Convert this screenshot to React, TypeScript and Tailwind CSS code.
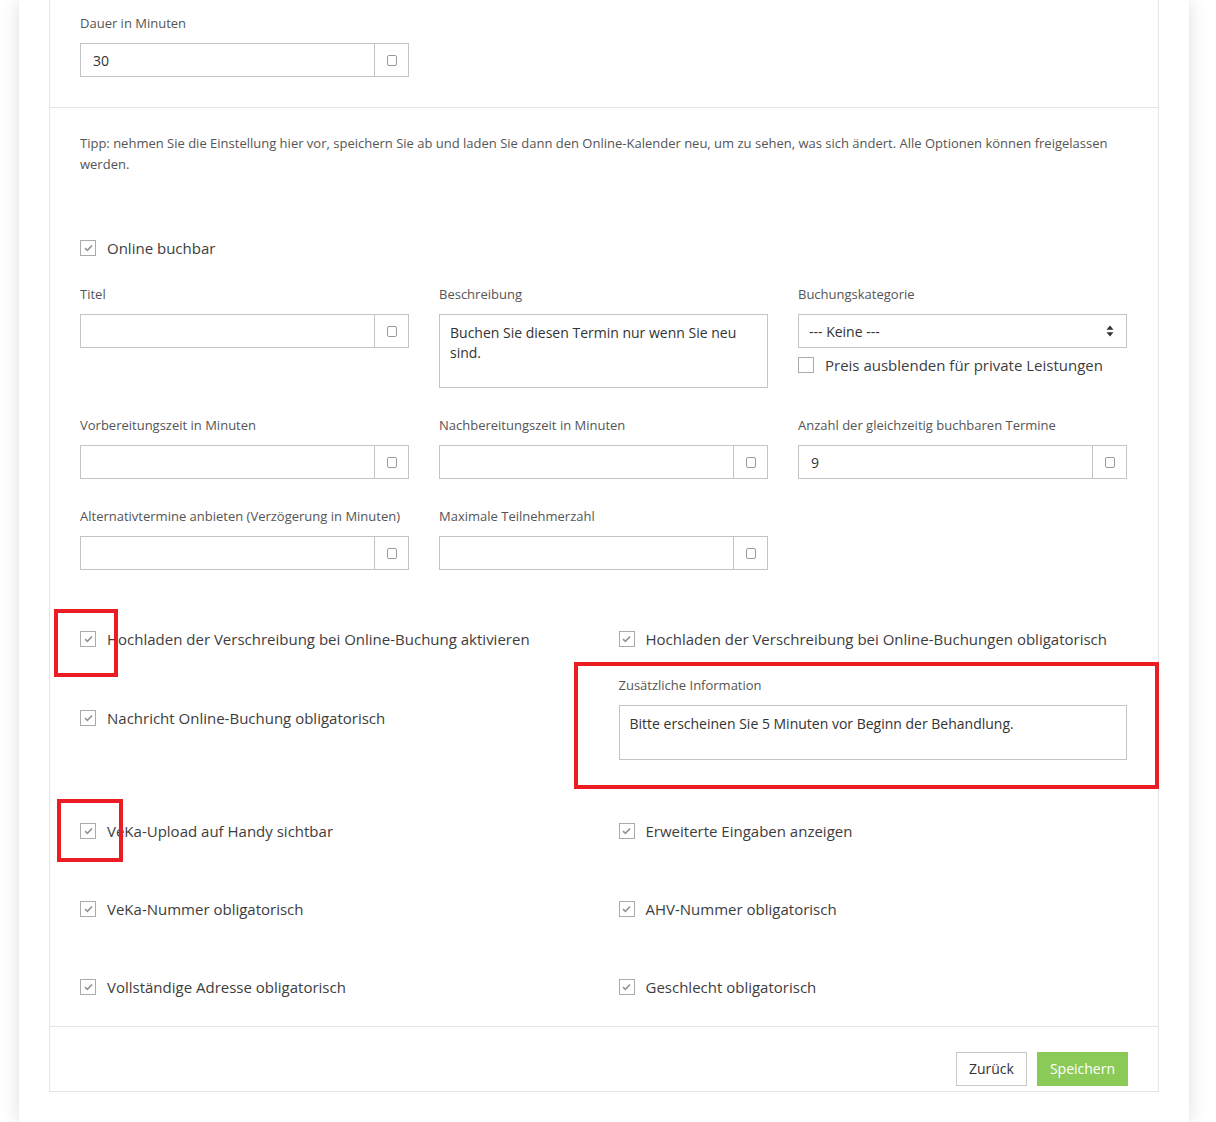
import React from "react";

const font = { fontFamily: '"Open Sans", "Liberation Sans", sans-serif' };

const SquareIcon = () => (
    <span className="block w-[10px] h-[11px] border border-[#9a9a9a] rounded-[2px]" />
);

const Label = ({ children }: { children: React.ReactNode }) => (
    <p className="text-[13px] leading-[18px] text-[#555] mb-[11px] whitespace-nowrap">{children}</p>
);

const AddonInput = ({ value = "" }: { value?: string }) => (
    <div className="flex h-[34px] border border-[#c4c4c4] bg-white">
        <div className="flex-1 flex items-center pl-[12px] text-[14px] text-[#333]">{value}</div>
        <div className="w-[34px] border-l border-[#c4c4c4] flex items-center justify-center">
            <SquareIcon />
        </div>
    </div>
);

const Field = ({ label, value }: { label: string; value?: string }) => (
    <div>
        <Label>{label}</Label>
        <AddonInput value={value} />
    </div>
);

const Check = ({ checked = true, children }: { checked?: boolean; children: React.ReactNode }) => (
    <div className="flex items-center h-[22px]">
        <span className="w-[16px] h-[16px] border border-[#aaa] bg-white flex items-center justify-center shrink-0">
            {checked && (
                <svg width="9" height="8" viewBox="0 0 9 8">
                    <path d="M1 4.2 L3.4 6.3 L8 1.5" fill="none" stroke="#959595" strokeWidth="1.7" />
                </svg>
            )}
        </span>
        <span className="ml-[11px] text-[15px] leading-[22px] text-[#3d3d3d] whitespace-nowrap">{children}</span>
    </div>
);

const App = () => {
    return (
        <div className="min-h-[1122px] bg-white overflow-hidden" style={font}>
            <div className="relative ml-[19px] w-[1170px] min-h-[1122px] bg-white shadow-[0_0_18px_rgba(0,0,0,0.13)] px-[30px]">
                <div className="border-x border-b border-[#e6e6e6]">
                    {/* Dauer */}
                    <div className="pl-[30px] pr-[31px] pt-[14px] pb-[30px] border-b border-[#e6e6e6]">
                        <div className="w-[329px]">
                            <Field label="Dauer in Minuten" value="30" />
                        </div>
                    </div>

                    {/* main settings */}
                    <div className="pl-[30px] pr-[31px] pt-[25px] border-b border-[#e6e6e6]">
                        <p className="text-[13px] leading-[21px] text-[#555]">
                            Tipp: nehmen Sie die Einstellung hier vor, speichern Sie ab und laden Sie dann den Online-Kalender neu, um zu sehen, was sich ändert. Alle Optionen können freigelassen werden.
                        </p>
                        <div className="mt-[62px]">
                            <Check>Online buchbar</Check>
                        </div>

                        <div className="mt-[26px] grid grid-cols-3 gap-x-[30px] gap-y-[28px]">
                            <Field label="Titel" />
                            <div>
                                <Label>Beschreibung</Label>
                                <div className="h-[74px] border border-[#c4c4c4] px-[10px] pt-[8px] text-[14px] leading-[20px] text-[#333]">
                                    Buchen Sie diesen Termin nur wenn Sie neu sind.
                                </div>
                            </div>
                            <div>
                                <Label>Buchungskategorie</Label>
                                <div className="h-[34px] border border-[#c4c4c4] flex items-center justify-between pl-[10px] pr-[12px] text-[14px] text-[#333]">
                                    <span>--- Keine ---</span>
                                    <svg width="8" height="12" viewBox="0 0 8 12">
                                        <path d="M4 0.5 L7.5 4.8 L0.5 4.8 Z M4 11.5 L7.5 7.2 L0.5 7.2 Z" fill="#333" />
                                    </svg>
                                </div>
                                <div className="mt-[6px]">
                                    <Check checked={false}>Preis ausblenden für private Leistungen</Check>
                                </div>
                            </div>

                            <Field label="Vorbereitungszeit in Minuten" />
                            <Field label="Nachbereitungszeit in Minuten" />
                            <Field label="Anzahl der gleichzeitig buchbaren Termine" value="9" />

                            <Field label="Alternativtermine anbieten (Verzögerung in Minuten)" />
                            <Field label="Maximale Teilnehmerzahl" />
                        </div>

                        <div className="mt-[30px] grid grid-cols-2 gap-x-[30px]">
                            <div className="h-[78px] flex items-center"><Check>Hochladen der Verschreibung bei Online-Buchung aktivieren</Check></div>
                            <div className="h-[78px] flex items-center"><Check>Hochladen der Verschreibung bei Online-Buchungen obligatorisch</Check></div>

                            <div className="h-[82px] pt-[29px]"><Check>Nachricht Online-Buchung obligatorisch</Check></div>
                            <div className="h-[82px] flex items-end">
                                <div className="w-full">
                                    <Label>Zusätzliche Information</Label>
                                    <div className="h-[55px] border border-[#c4c4c4] px-[10px] pt-[8px] text-[14px] leading-[20px] text-[#333]">
                                        Bitte erscheinen Sie 5 Minuten vor Beginn der Behandlung.
                                    </div>
                                </div>
                            </div>
                        </div>

                        <div className="mt-[31px] grid grid-cols-2 gap-x-[30px]">
                            <div className="h-[79px] flex items-center"><Check>VeKa-Upload auf Handy sichtbar</Check></div>
                            <div className="h-[79px] flex items-center"><Check>Erweiterte Eingaben anzeigen</Check></div>
                            <div className="h-[78px] flex items-center"><Check>VeKa-Nummer obligatorisch</Check></div>
                            <div className="h-[78px] flex items-center"><Check>AHV-Nummer obligatorisch</Check></div>
                            <div className="h-[78px] flex items-center"><Check>Vollständige Adresse obligatorisch</Check></div>
                            <div className="h-[78px] flex items-center"><Check>Geschlecht obligatorisch</Check></div>
                        </div>
                    </div>

                    {/* footer */}
                    <div className="flex justify-end gap-[10px] pl-[30px] pr-[30px] pt-[25px] pb-[5px]">
                        <button className="h-[34px] px-[12px] border border-[#c8c8c8] bg-white text-[14px] leading-[32px] text-[#333]">Zurück</button>
                        <button className="h-[34px] px-[13px] bg-[#8cca57] text-[14px] leading-[32px] text-white">Speichern</button>
                    </div>
                </div>

                {/* red annotation boxes */}
                <div className="absolute left-[35px] top-[609px] w-[64px] h-[68px] border-[4px] border-[#ec1c24]" />
                <div className="absolute left-[555px] top-[662px] w-[585px] h-[127px] border-[4px] border-[#ec1c24]" />
                <div className="absolute left-[38px] top-[799px] w-[66px] h-[63px] border-[4px] border-[#ec1c24]" />
            </div>
        </div>
    );
};

export default App;
